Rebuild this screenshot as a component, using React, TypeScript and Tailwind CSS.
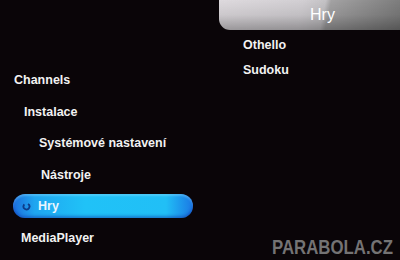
import React from "react";

function DiscIcon() {
  return (
    <svg width="9" height="9" viewBox="0 0 10 10" className="shrink-0">
      <circle cx="5" cy="5" r="3.3" fill="none" stroke="#0d3c8a" strokeWidth="2" strokeDasharray="16 5" transform="rotate(-60 5 5)" />
    </svg>
  );
}

export default function App() {
  const item = "text-[12.5px] font-bold text-[#f2f2f2] leading-none";
  return (
    <div
      className="relative w-[400px] h-[260px] overflow-hidden bg-[#0a0508] flex"
      style={{ fontFamily: '"Liberation Sans", Arial, sans-serif' }}
    >
      <div className="w-[219px] shrink-0 flex flex-col pt-[74px]">
        <div className={`${item} pl-[14px] h-[32px]`}>Channels</div>
        <div className={`${item} pl-[24px] h-[31px]`}>Instalace</div>
        <div className={`${item} pl-[39px] h-[32px]`}>Systémové nastavení</div>
        <div className={`${item} pl-[41px] h-[25px]`}>Nástroje</div>
        <div className="ml-[13px] w-[180px] h-[24px] rounded-full flex items-center gap-[7px] pl-[9px] bg-[linear-gradient(90deg,#1d6fdd_0%,#1fa6f0_12%,#20c2f7_40%,#21bff6_85%,#1b78e4_100%)] shadow-[inset_0_-2px_3px_rgba(10,40,160,0.45),inset_0_2px_2px_rgba(160,230,255,0.35)]">
          <DiscIcon />
          <span className="text-[12.5px] font-bold text-[#eaf6ff] leading-none">Hry</span>
        </div>
        <div className={`${item} pl-[21px] mt-[14px]`}>MediaPlayer</div>
      </div>
      <div className="flex-1 flex flex-col">
        <div className="h-[30px] rounded-bl-[11px] flex items-center justify-center pl-[26px] bg-[linear-gradient(180deg,rgba(0,0,0,0)_0%,rgba(0,0,0,0.08)_50%,rgba(0,0,0,0.3)_100%),linear-gradient(102deg,#dedade_0%,#d2cfd3_45%,#c4c2c5_57%,#a3a2a3_60%,#7a7a7a_100%)]">
          <span className="text-[16px] text-white leading-none">Hry</span>
        </div>
        <div className={`${item} pl-[24px] mt-[9px]`}>Othello</div>
        <div className={`${item} pl-[24px] mt-[12px]`}>Sudoku</div>
      </div>
      <div className="absolute left-[272px] top-[237px] text-[20px] font-bold text-[#747374] leading-none scale-x-[0.84] origin-left whitespace-nowrap">
        PARABOLA.CZ
      </div>
    </div>
  );
}
